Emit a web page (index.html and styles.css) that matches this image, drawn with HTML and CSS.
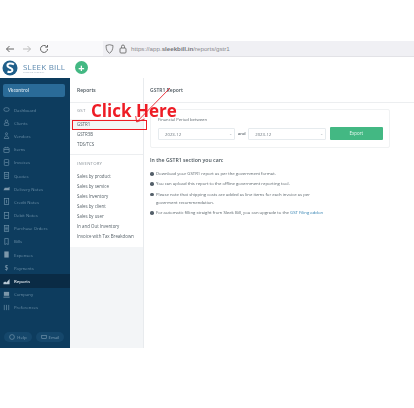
FILE: index.html
```html
<!DOCTYPE html>
<html lang="en">
<head>
<meta charset="utf-8">
<title>GSTR1 Report</title>
<link rel="stylesheet" href="styles.css">
</head>
<body>
<div class="shot">
  <div class="browser">
    <div class="nav-icons">
      <svg width="10" height="10" viewBox="0 0 10 10"><path d="M9 5H1.500M4.500 2 1.500 5l3 3" fill="none" stroke="#666" stroke-width="1"/></svg>
      <svg width="10" height="10" viewBox="0 0 10 10"><path d="M1 5h7.500M5.500 2l3 3-3 3" fill="none" stroke="#bbb" stroke-width="1"/></svg>
      <svg width="10" height="10" viewBox="0 0 10 10"><path d="M8.500 5a3.500 3.500 0 1 1-1-2.500M8.500 1v2.200H6.300" fill="none" stroke="#666" stroke-width="1"/></svg>
    </div>
    <div class="urlbar">
      <svg class="shield" width="9" height="10" viewBox="0 0 9 10"><path d="M1 1.500 4.500.700 8 1.500c0 4-1.200 6.300-3.500 7.700C2.200 7.800 1 5.500 1 1.500Z" fill="none" stroke="#777" stroke-width=".9"/></svg>
      <svg class="lock" width="8" height="10" viewBox="0 0 8 10"><rect x="1" y="4" width="6" height="5" rx="1" fill="none" stroke="#777"/><path d="M2.500 4V2.500a1.500 1.500 0 0 1 3 0V4" fill="none" stroke="#777"/></svg>
      <span class="url">https://app.<b>sleekbill.in</b>/reports/gstr1</span>
    </div>
  </div>
  <div class="app">
    <header class="app-head">
      <svg class="logo-mark" width="16" height="16" viewBox="0 0 16 16"><circle cx="8" cy="8" r="7.500" fill="#1f5f8a"/><path d="M12 4.500C9 2.500 5 3.500 5.500 6c.4 2 5 1.500 5 4 0 2-3 2.500-5 1.500" fill="none" stroke="#fff" stroke-width="2"/></svg>
      <div class="logo-text">
        <span class="logo-name">SLEEK BILL</span>
        <span class="logo-sub">INVOICING MADE EASY</span>
      </div>
      <span class="plus">+</span>
    </header>
    <div class="columns">
      <aside class="sidebar">
        <div class="company">Vkcontrol</div>
        <nav class="menu">
          <a class="mi"><svg class="ic" viewBox="0 0 8 8"><rect x="1" y="2" width="6" height="4" rx="2"/></svg>Dashboard</a>
          <a class="mi"><svg class="ic" viewBox="0 0 8 8"><circle cx="4" cy="2.500" r="1.500"/><rect x="1.500" y="4.500" width="5" height="3" rx="1"/></svg>Clients</a>
          <a class="mi"><svg class="ic" viewBox="0 0 8 8"><circle cx="4" cy="2" r="1.200"/><path d="M1.500 7.500c0-4 5-4 5 0Z"/></svg>Vendors</a>
          <a class="mi"><svg class="ic" viewBox="0 0 8 8"><rect x="1" y="2" width="6" height="5.500" rx=".5"/><path d="M1 4h6M3 1v1M5 1v1"/></svg>Items</a>
          <a class="mi"><svg class="ic" viewBox="0 0 8 8"><rect x="1.500" y=".5" width="5" height="7" rx="1"/><path d="M2.500 4h3"/></svg>Invoices</a>
          <a class="mi"><svg class="ic" viewBox="0 0 8 8"><rect x="1.500" y=".5" width="5" height="7"/><path d="M2.500 3h3M2.500 5h3"/></svg>Quotes</a>
          <a class="mi"><svg class="ic solid" viewBox="0 0 8 8"><path d="M.5 6 2 3h4l1.500-1v4Z"/></svg>Delivery Notes</a>
          <a class="mi"><svg class="ic" viewBox="0 0 8 8"><rect x="1.500" y=".5" width="5" height="7"/><path d="M4 2v4"/></svg>Credit Notes</a>
          <a class="mi"><svg class="ic" viewBox="0 0 8 8"><rect x="1.500" y=".5" width="5" height="7"/><path d="M2.500 4h3"/></svg>Debit Notes</a>
          <a class="mi"><svg class="ic" viewBox="0 0 8 8"><rect x="1.500" y=".5" width="5" height="7"/><path d="M2.500 2.500h3M2.500 4h3M2.500 5.500h3"/></svg>Purchase Orders</a>
          <a class="mi"><svg class="ic" viewBox="0 0 8 8"><path d="M2 .5h4v7L4 6.500 2 7.500Z"/></svg>Bills</a>
          <a class="mi"><svg class="ic solid" viewBox="0 0 8 8"><rect x="1.500" y=".5" width="5" height="7"/></svg>Expenses</a>
          <a class="mi"><span class="ic dollar">$</span>Payments</a>
          <a class="mi active"><svg class="ic solid" viewBox="0 0 8 8"><path d="M.5 7V5l2-1 1.500 1 3.500-4v6Z"/></svg>Reports</a>
          <a class="mi"><svg class="ic solid" viewBox="0 0 8 8"><rect x="1" y="1" width="6" height="4.500"/><rect x=".5" y="6.500" width="7" height="1"/></svg>Company</a>
          <a class="mi"><svg class="ic" viewBox="0 0 8 8"><path d="M1.500 1v6M4 1v6M6.500 1v6"/></svg>Preferences</a>
        </nav>
        <div class="side-btns">
          <a class="side-btn"><svg class="ic-s" viewBox="0 0 8 8"><circle cx="4" cy="4" r="3.200"/></svg>Help</a>
          <a class="side-btn"><svg class="ic-s" viewBox="0 0 8 8"><rect x="1" y="2" width="6" height="4"/></svg>Email</a>
        </div>
      </aside>
      <section class="reports">
        <h2 class="col-title">Reports</h2>
        <div class="rep-card">
          <h3 class="rep-head">GST</h3>
          <a class="rep sel">GSTR1</a>
          <a class="rep">GSTR3B</a>
          <a class="rep">TDS/TCS</a>
          <div class="rep-rule"></div>
          <h3 class="rep-head inv">INVENTORY</h3>
          <a class="rep">Sales by product</a>
          <a class="rep">Sales by service</a>
          <a class="rep">Sales Inventory</a>
          <a class="rep">Sales by client</a>
          <a class="rep">Sales by user</a>
          <a class="rep">In and Out Inventory</a>
          <a class="rep">Invoice with Tax Breakdown</a>
        </div>
      </section>
      <main class="main">
        <h1 class="col-title main-title">GSTR1 Report</h1>
        <div class="main-body">
          <div class="period">
            <div class="period-label">Financial Period between</div>
            <div class="period-row">
              <div class="select">2023-12<span class="caret">⌄</span></div>
              <span class="and">and</span>
              <div class="select">2023-12<span class="caret">⌄</span></div>
              <a class="export">Export</a>
            </div>
          </div>
          <h2 class="can">In the GSTR1 section you can:</h2>
          <ul class="list">
            <li>Download your GSTR1 report as per the government format.</li>
            <li>You can upload this report to the offline government reporting tool.</li>
            <li>Please note that shipping costs are added as line items for each invoice as per<br>goverment recommendation.</li>
            <li>For automatic filling straight from Sleek Bill, you can upgrade to the <a class="link">GST Filing addon</a></li>
          </ul>
        </div>
      </main>
    </div>
  </div>
  <div class="annot-text">Click Here</div>
  <div class="annot-box"></div>
  <svg class="annot-arrow" width="44" height="44" viewBox="0 0 44 44"><path d="M39 1 6 34.700M4.700 29l1 6 8-3" fill="none" stroke="#e8202a" stroke-width=".9"/></svg>
</div>
</body>
</html>
```
FILE: styles.css
```css
* { box-sizing: border-box; margin: 0; padding: 0; }
html, body { width: 414px; height: 408px; overflow: hidden; background: #fff; }
body { font-family: "Open Sans", "Liberation Sans", sans-serif; }
.shot { position: relative; width: 414px; height: 408px; padding-top: 41px; filter: blur(0.45px); }
.browser { display: flex; align-items: center; height: 16px; background: #f9f9fb; border-bottom: 1px solid #e2e2e6; }
.nav-icons { display: flex; gap: 7px; width: 103px; padding-left: 5px; }
.nav-icons svg { width: 10px; height: 10px; }
.urlbar { display: flex; align-items: center; flex: 1; height: 15px; background: #f0f0f4; gap: 5px; padding-left: 2px; }
.url { font-family: "Liberation Sans", sans-serif; font-size: 6.2px; color: #8a8a8f; margin-left: -1px; }
.url b { font-weight: 700; color: #77777c; }
.app { display: flex; flex-direction: column; height: 291px; }
.app-head { display: flex; align-items: center; height: 21px; padding-left: 2px; background: #fff; }
.logo-text { display: flex; flex-direction: column; margin-left: 5px; width: 45px; padding-top: 2px; }
.logo-name { font-size: 8px; line-height: 8px; font-weight: 400; color: #5f8bb0; letter-spacing: .2px; white-space: nowrap; }
.logo-sub { font-size: 2px; line-height: 2px; margin-top: 1px; color: #9ab; white-space: nowrap; }
.plus { display: flex; align-items: center; justify-content: center; width: 13px; height: 13px; margin-left: 7px; border-radius: 50%; background: #43b883; color: #fff; font-size: 11px; font-weight: 700; line-height: 1; }
.columns { display: flex; flex: 1; min-height: 0; }
.sidebar { display: flex; flex-direction: column; width: 70px; background: #0d3c5e; padding-top: 6px; }
.company { margin: 0 5px 0 3px; height: 13px; border-radius: 2px; background: #2a6b98; color: #d8e6ef; font-size: 4.500px; line-height: 13px; padding-left: 5px; font-weight: 600; }
.menu { display: flex; flex-direction: column; margin-top: 6px; }
.mi { display: flex; align-items: center; height: 13.200px; padding-left: 3px; font-size: 4.300px; color: #6a8ea6; white-space: nowrap; }
.mi.active { background: #0a2b45; color: #e8eef3; font-weight: 600; }
.ic { width: 7px; height: 7px; margin-right: 4px; flex: none; fill: none; stroke: #6a8ea6; stroke-width: .8; }
.ic.solid { fill: #7c97aa; stroke: none; }
.mi.active .ic { fill: #b8c8d4; }
.dollar { font-size: 7px; line-height: 7px; color: #8aa5b8; text-align: center; }
.side-btns { display: flex; gap: 4px; margin-top: auto; margin-bottom: 6px; padding: 0 4px; }
.side-btn { display: flex; align-items: center; justify-content: center; gap: 2px; width: 28px; height: 10px; border-radius: 6px; background: #15476b; color: #7f9fb5; font-size: 4.300px; }
.ic-s { width: 6px; height: 6px; fill: none; stroke: #7f9fb5; stroke-width: .8; }
.reports { display: flex; flex-direction: column; width: 74px; background: #f3f5f7; border-right: 1px solid #e8ebee; }
.col-title { height: 25px; background: #fff; border-bottom: 1px solid #eceef0; font-size: 5px; line-height: 25px; font-weight: 600; color: #4a555c; padding-left: 7px; }
.rep-card { background: #fff; padding: 3px 0 6px; display: flex; flex-direction: column; }
.rep-head { font-size: 4.300px; font-weight: 400; color: #8a9299; padding-left: 7px; height: 9px; line-height: 9px; letter-spacing: .2px; margin-bottom: 4px; }
.rep { font-size: 4.400px; line-height: 10px; height: 10px; color: #566168; padding-left: 7px; white-space: nowrap; }
.rep.sel { background: #f3f4f5; }
.rep-rule { height: 1px; background: #eceef0; margin: 5px 0 4px; }
.rep-head.inv { margin-bottom: 3px; }
.main { flex: 1; display: flex; flex-direction: column; background: #fff; }
.main-title { padding-left: 6px; }
.main-body { padding: 6px 0 0 6px; }
.period { width: 240px; height: 39px; border: 1px solid #f0f2f3; border-radius: 2px; padding: 7px 6px 0 7px; }
.period-label { font-size: 4.200px; line-height: 6px; color: #5c666d; }
.period-row { display: flex; align-items: center; margin-top: 4px; }
.select { position: relative; width: 78px; height: 12px; border: 1px solid #e6ebee; border-radius: 1px; padding-left: 6px; font-size: 4.300px; line-height: 11px; color: #69737a; }
.caret { position: absolute; right: 2px; top: -1px; color: #aab2b8; font-size: 4px; }
.and { width: 13px; text-align: center; font-size: 4.200px; font-weight: 600; color: #5a646b; }
.export { width: 54px; height: 13px; margin-left: 4px; border-radius: 1px; background: #43b883; color: #eafaf2; font-size: 4.500px; line-height: 13px; text-align: center; }
.can { margin-top: 8px; font-size: 5.200px; line-height: 8px; font-weight: 600; color: #49545b; }
.list { list-style: none; margin-top: 6px; }
.list li { position: relative; font-size: 4.250px; line-height: 7.800px; color: #5a646b; padding-left: 6px; margin-bottom: 2.700px; }
.list li::before { content: ""; position: absolute; left: 0; top: 2px; width: 3.500px; height: 3.500px; border-radius: 50%; background: #55606a; }
.link { color: #2f7fb0; }
.annot-text { position: absolute; left: 91px; top: 100px; font-size: 17px; line-height: 22px; font-weight: 700; color: #ee1c25; white-space: nowrap; }
.annot-box { position: absolute; left: 72px; top: 120px; width: 75px; height: 10px; border: 1px solid #ee1c25; }
.annot-arrow { position: absolute; left: 131px; top: 87px; }
```
